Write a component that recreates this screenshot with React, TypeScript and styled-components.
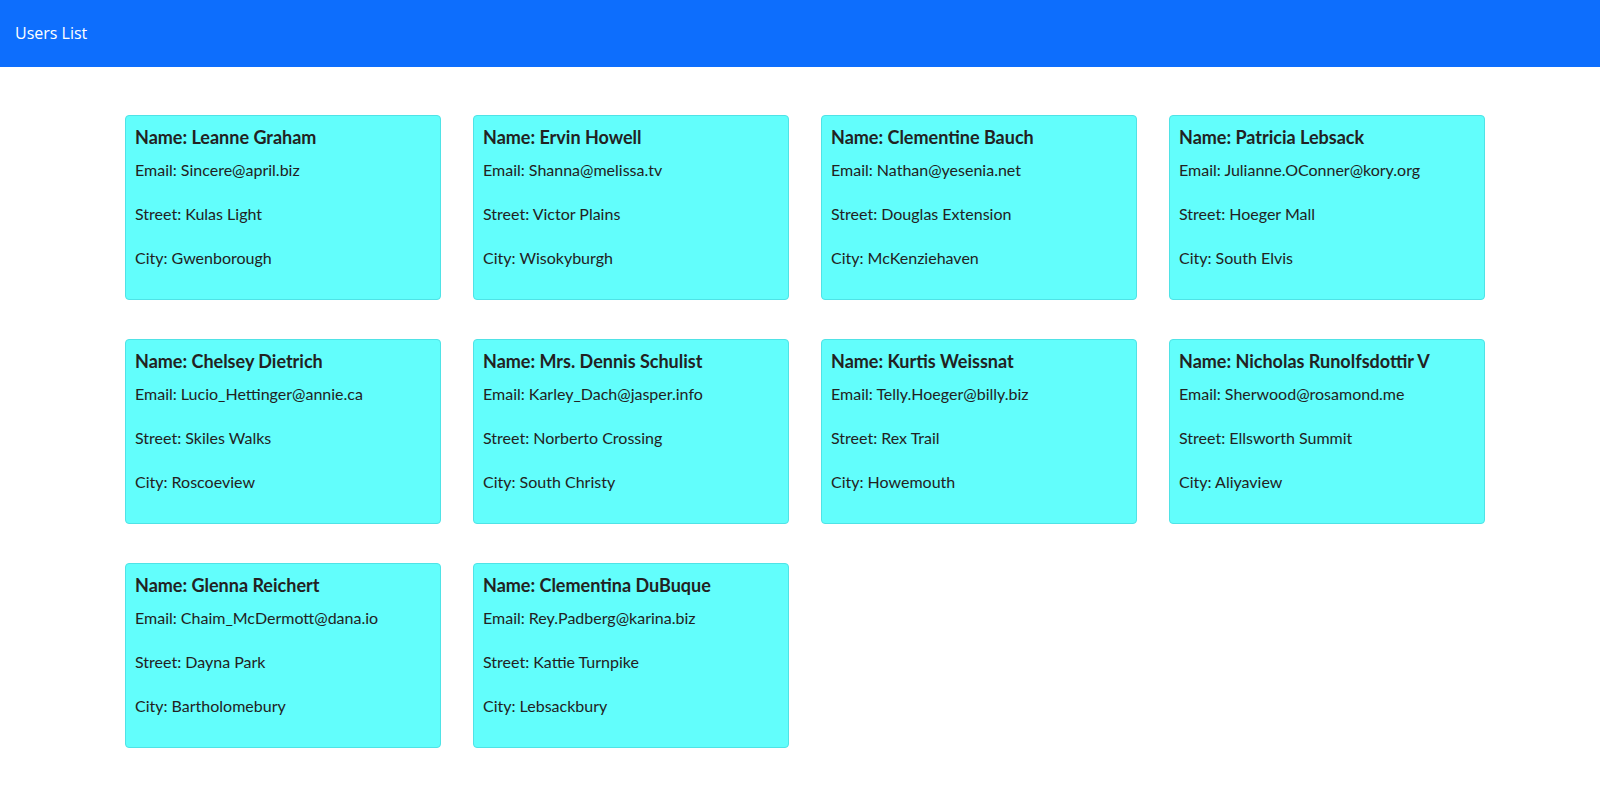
import styled, { createGlobalStyle } from "styled-components";

const GlobalStyle = createGlobalStyle`
  body {
    margin: 0;
    background: #ffffff;
    font-family: "Lato", "Noto Sans", sans-serif;
    color: #212529;
  }
`;

type User = {
  name: string;
  email: string;
  street: string;
  city: string;
};

const users: User[] = [
  { name: "Leanne Graham", email: "Sincere@april.biz", street: "Kulas Light", city: "Gwenborough" },
  { name: "Ervin Howell", email: "Shanna@melissa.tv", street: "Victor Plains", city: "Wisokyburgh" },
  { name: "Clementine Bauch", email: "Nathan@yesenia.net", street: "Douglas Extension", city: "McKenziehaven" },
  { name: "Patricia Lebsack", email: "Julianne.OConner@kory.org", street: "Hoeger Mall", city: "South Elvis" },
  { name: "Chelsey Dietrich", email: "Lucio_Hettinger@annie.ca", street: "Skiles Walks", city: "Roscoeview" },
  { name: "Mrs. Dennis Schulist", email: "Karley_Dach@jasper.info", street: "Norberto Crossing", city: "South Christy" },
  { name: "Kurtis Weissnat", email: "Telly.Hoeger@billy.biz", street: "Rex Trail", city: "Howemouth" },
  { name: "Nicholas Runolfsdottir V", email: "Sherwood@rosamond.me", street: "Ellsworth Summit", city: "Aliyaview" },
  { name: "Glenna Reichert", email: "Chaim_McDermott@dana.io", street: "Dayna Park", city: "Bartholomebury" },
  { name: "Clementina DuBuque", email: "Rey.Padberg@karina.biz", street: "Kattie Turnpike", city: "Lebsackbury" }
];

const NavBar = styled.nav`
  height: 67px;
  background-color: #0d6efd;
  display: flex;
  align-items: center;
  padding: 0 15px;
`;

const Brand = styled.span`
  color: #ffffff;
  font-family: "Open Sans", "Noto Sans", sans-serif;
  font-size: 16px;
  margin-top: -1px;
`;

const CardGrid = styled.main`
  display: grid;
  grid-template-columns: repeat(4, 316px);
  column-gap: 32px;
  row-gap: 39px;
  padding: 48px 0 40px 125px;
`;

const Card = styled.div`
  box-sizing: border-box;
  height: 185px;
  background-color: #62fefc;
  border: 1px solid #4fe3e6;
  border-radius: 4px;
  padding: 8px 9px;
`;

const Name = styled.h5`
  margin: 0 0 6px;
  font-size: 18px;
  font-weight: 700;
  line-height: 26px;
  color: #222222;
`;

const Field = styled.p`
  margin: 0 0 17px;
  font-size: 16px;
  line-height: 27px;
  color: #222222;
`;

export default function App(): JSX.Element {
  return (
    <>
      <GlobalStyle />
      <NavBar>
        <Brand>Users List</Brand>
      </NavBar>
      <CardGrid>
        {users.map((user) => (
          <Card key={user.email}>
            <Name>Name: {user.name}</Name>
            <Field>Email: {user.email}</Field>
            <Field>Street: {user.street}</Field>
            <Field>City: {user.city}</Field>
          </Card>
        ))}
      </CardGrid>
    </>
  );
}
